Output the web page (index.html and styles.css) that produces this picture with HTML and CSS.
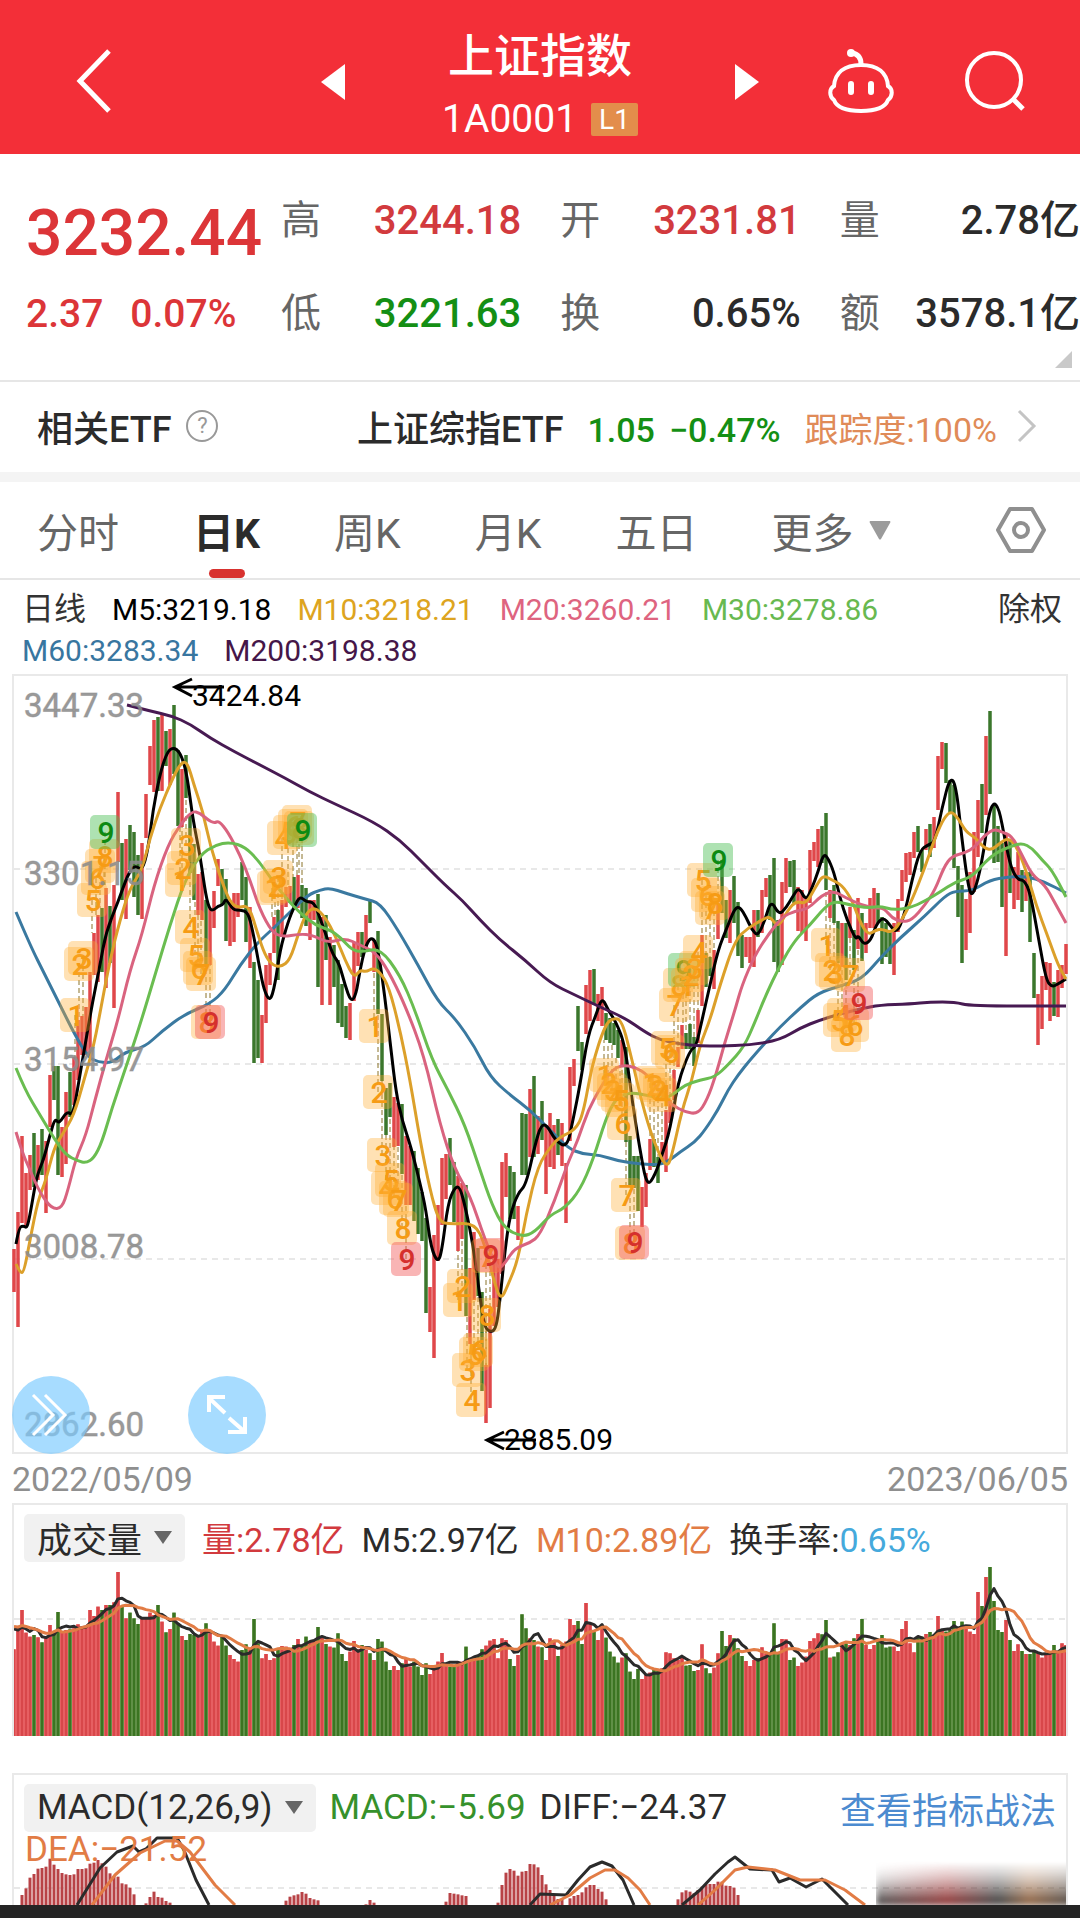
FILE: index.html
```html
<!DOCTYPE html>
<html lang="zh-CN">
<head>
<meta charset="utf-8">
<meta name="viewport" content="width=device-width, initial-scale=1">
<title>上证指数 1A0001</title>
<link rel="stylesheet" href="styles.css">
</head>
<body>
<header class="topbar">
  <button class="icon-btn back" aria-label="返回"><svg width="40" height="66" viewBox="0 0 40 66"><path d="M35 3 6 33l29 30" fill="none" stroke="#fff" stroke-width="5"/></svg></button>
  <div class="switcher">
    <button class="icon-btn" aria-label="上一个"><svg width="26" height="36" viewBox="0 0 26 36"><path d="M25 0v36L1 18z" fill="#fff"/></svg></button>
    <div class="title">
      <h1>上证指数</h1>
      <p>1A0001<span class="level">L1</span></p>
    </div>
    <button class="icon-btn" aria-label="下一个"><svg width="26" height="36" viewBox="0 0 26 36"><path d="M1 0v36l24-18z" fill="#fff"/></svg></button>
  </div>
  <button class="icon-btn robot" aria-label="助手"><svg width="70" height="66" viewBox="0 0 70 66"><g fill="none" stroke="#fff" stroke-width="4" stroke-linecap="round"><path d="M35 17c17 0 26 8 27 21 5 3 5 10 0 14-3 8-12 11-27 11S11 60 8 52c-5-4-5-11 0-14 1-13 10-21 27-21z"/><path d="M35 16c0-6-3-10-9-11" stroke-width="5"/><path d="M25 36v8M45 36v8" stroke-width="6"/></g><circle cx="25" cy="5" r="4" fill="#fff"/></svg></button>
  <button class="icon-btn" aria-label="搜索"><svg width="62" height="62" viewBox="0 0 62 62"><g fill="none" stroke="#fff" stroke-width="4"><circle cx="30" cy="30" r="27"/><path d="m49 49 10 10" stroke-width="5"/></g></svg></button>
</header>

<main>
<section class="quote">
  <div class="last">
    <strong>3232.44</strong>
    <p><span>2.37</span><span>0.07%</span></p>
  </div>
  <dl class="stats">
    <div><dt>高</dt><dd class="up">3244.18</dd></div>
    <div><dt>开</dt><dd class="up">3231.81</dd></div>
    <div><dt>量</dt><dd>2.78亿</dd></div>
    <div><dt>低</dt><dd class="down">3221.63</dd></div>
    <div><dt>换</dt><dd>0.65%</dd></div>
    <div><dt>额</dt><dd>3578.1亿</dd></div>
  </dl>
  <svg class="corner" width="17" height="17" viewBox="0 0 17 17"><path d="M17 0v17H0z" fill="#c9c9c9"/></svg>
</section>

<section class="etf">
  <span class="etf-label">相关ETF</span>
  <button class="icon-btn help" aria-label="说明">?</button>
  <a class="etf-link" href="#etf"><span class="etf-name">上证综指ETF</span><span class="down">1.05</span><span class="down pct">−0.47%</span><span class="track">跟踪度:100%</span><svg width="20" height="34" viewBox="0 0 20 34"><path d="m2 2 15 15L2 32" fill="none" stroke="#c4c4c4" stroke-width="3"/></svg></a>
</section>

<nav class="tabs">
  <button>分时</button>
  <button class="active">日K</button>
  <button>周K</button>
  <button>月K</button>
  <button>五日</button>
  <button class="more">更多<svg width="22" height="19" viewBox="0 0 22 19"><path d="M1 0h20q1 1 0 2L12 18q-1 1-2 0L1 2q-1-1 0-2z" fill="#9b9b9b"/></svg></button>
  <button class="gear" aria-label="设置"><svg width="50" height="48" viewBox="0 0 50 48"><g fill="none" stroke="#8f8f8f" stroke-width="4" stroke-linejoin="round"><path d="M14 3h22l12 21-12 21H14L2 24z"/><circle cx="25" cy="24" r="7"/></g></svg></button>
</nav>

<section class="legend">
  <span class="name">日线</span><span class="m5">M5:3219.18</span><span class="m10">M10:3218.21</span><span class="m20">M20:3260.21</span><span class="m30">M30:3278.86</span><button class="rights">除权</button>
  <span class="m60">M60:3283.34</span><span class="m200">M200:3198.38</span>
</section>

<section class="price">
  <svg id="price" viewBox="12 674 1056 780" role="img" aria-label="日K线图"></svg>
  <button class="round shift" aria-label="右移"><svg width="42" height="46" viewBox="0 0 42 46"><path d="m3 3 20 20L3 43M15 3l20 20-20 20" fill="none" stroke="#fff" stroke-width="3"/></svg></button>
  <button class="round expand" aria-label="全屏"><svg width="42" height="42" viewBox="0 0 42 42"><path d="M19 19 3 4M3 18V3h16M23 24l16 14M39 23v15H22" fill="none" stroke="#fff" stroke-width="4"/></svg></button>
</section>
<div class="dates"><time>2022/05/09</time><time>2023/06/05</time></div>

<section class="panel volume">
  <div class="panel-head">
    <button class="picker">成交量<svg width="18" height="13" viewBox="0 0 18 13"><path d="M0 0h18L9 13z" fill="#666"/></svg></button>
    <span class="up">量:2.78亿</span><span>M5:2.97亿</span><span class="orange">M10:2.89亿</span><span>换手率:<span class="cyan">0.65%</span></span>
  </div>
  <svg id="volume" viewBox="12 1567 1056 169" role="img" aria-label="成交量图"></svg>
</section>

<section class="panel macd">
  <div class="panel-head">
    <button class="picker">MACD(12,26,9)<svg width="18" height="13" viewBox="0 0 18 13"><path d="M0 0h18L9 13z" fill="#666"/></svg></button>
    <span class="leaf">MACD:−5.69</span><span>DIFF:−24.37</span><a href="#guide">查看指标战法</a>
  </div>
  <svg id="macd" viewBox="12 1837 1056 68" role="img" aria-label="MACD图"></svg>
  <div class="smudge"></div>
</section>
</main>
<footer class="bottom"></footer>
<script src="chart.js"></script>
</body>
</html>
```
FILE: styles.css
```css
* { box-sizing: border-box; }
body {
  margin: 0;
  background: #fff;
  color: #2b2b2b;
  font-family: Roboto, "Noto Sans CJK SC", sans-serif;
  font-weight: 500;
}
button { border: 0; padding: 0; background: none; color: inherit; font: inherit; }
a { color: inherit; text-decoration: none; }
h1, p, dl, dd { margin: 0; }
svg { display: block; }
.up { color: #d23a3e; }
.down { color: #148f14; }

.topbar {
  position: relative;
  display: flex;
  align-items: center;
  justify-content: flex-end;
  gap: 68px;
  height: 154px;
  padding: 8px 54px 0 74px;
  background: #f32f38;
  color: #fff;
}
.back { margin-right: auto; }
.switcher {
  position: absolute;
  left: 50%;
  top: 24px;
  display: flex;
  align-items: flex-start;
  justify-content: space-between;
  width: 440px;
  transform: translateX(-50%);
}
.switcher .icon-btn { margin-top: 40px; }
.title h1 { font-size: 46px; line-height: 64px; font-weight: 500; text-align: center; }
.title p { display: flex; align-items: center; justify-content: center; gap: 14px; font-size: 39px; line-height: 62px; font-weight: 400; }
.level { padding: 0 8px; background: #e38d4b; font-size: 28px; line-height: 33px; border-radius: 2px; }

.quote { position: relative; display: flex; height: 226px; padding: 44px 0 0 26px; }
.last { width: 255px; color: #dc3538; }
.last strong { display: block; font-size: 64px; line-height: 72px; font-weight: 500; }
.last p { display: flex; gap: 27px; font-size: 39px; line-height: 46px; margin-top: 21px; }
.stats { flex: 1; display: grid; grid-template-columns: repeat(3, 1fr); column-gap: 39px; grid-auto-rows: 93px; }
.stats div { display: flex; justify-content: space-between; font-size: 40px; line-height: 46px; }
.stats dt { font-weight: 400; color: #666; }
.corner { position: absolute; right: 8px; bottom: 12px; }

.etf {
  display: flex;
  align-items: center;
  height: 92px;
  padding: 0 43px 2px 37px;
  border-top: 2px solid #e6e6e6;
  font-size: 36px;
}
.help { width: 32px; height: 32px; margin-left: 15px; border: 2px solid #999; border-radius: 50%; color: #999; font-size: 22px; line-height: 26px; font-weight: 400; }
.etf-link { display: flex; align-items: baseline; margin-left: auto; font-size: 34px; }
.etf-link svg { align-self: center; }
.etf-name { margin-right: 24px; font-size: 36px; }
.pct { margin-left: 14px; }
.track { margin: 0 20px 0 24px; color: #e08b58; font-weight: 400; }

.tabs {
  display: flex;
  align-items: center;
  gap: 74px;
  height: 108px;
  padding: 0 34px 0 37px;
  border-top: 10px solid #f4f4f4;
  border-bottom: 2px solid #e6e6e6;
  color: #666;
  font-size: 41px;
  font-weight: 400;
}
.tabs button { height: 100%; }
.tabs .active { position: relative; color: #2b2b2b; font-weight: 700; }
.active::after { content: ""; position: absolute; left: 50%; bottom: 0; width: 36px; height: 9px; margin-left: -18px; border-radius: 5px; background: #d8322f; }
.more { display: flex; align-items: center; gap: 15px; }
.tabs .gear { margin-left: auto; }

.legend { display: flex; flex-wrap: wrap; column-gap: 26px; padding: 9px 18px 3px 22px; font-size: 30px; line-height: 41px; }
.legend span, .rights { font-weight: 400; }
.rights { margin-left: auto; }
.legend .name, .rights { color: #333; font-size: 32px; }
.m5 { color: #000; }
.m10 { color: #dda420; }
.m20 { color: #de6480; }
.m30 { color: #68b950; }
.m60 { color: #3876a0; }
.m200 { color: #451648; }

.price { position: relative; margin: 0 12px; border: 2px solid #e9e9e9; }
.price > svg { width: calc(100% + 4px); margin: -2px; }
.round { position: absolute; bottom: -2px; display: grid; place-items: center; width: 78px; height: 78px; border-radius: 50%; background: rgba(125, 204, 255, .68); }
.shift { left: -2px; }
.expand { left: 174px; }
.dates { display: flex; justify-content: space-between; padding: 0 12px; color: #8f8f8f; font-size: 34px; line-height: 51px; height: 49px; font-weight: 400; }

.panel { position: relative; margin: 0 12px; border: 2px solid #e9e9e9; border-bottom: 0; overflow: hidden; }
.panel > svg { width: calc(100% + 4px); margin: 0 -2px; overflow: visible; }
.panel-head { display: flex; align-items: center; height: 62px; padding: 3px 10px 0; gap: 17px; font-size: 34px; font-weight: 400; white-space: nowrap; }
.panel-head a { margin-left: auto; color: #4c8bd0; font-size: 36px; }
.picker { display: flex; align-items: center; gap: 12px; height: 48px; padding: 0 13px; border-radius: 5px; background: #f1f1f1; font-size: 35px; }
.volume { margin-bottom: 37px; }
.macd .panel-head { gap: 14px; font-size: 35px; }
.orange { color: #e27c45; }
.cyan { color: #45a9dc; }
.leaf { color: #36912b; }
.smudge {
  position: absolute;
  right: -14px;
  bottom: 0;
  width: 204px;
  height: 44px;
  background: linear-gradient(90deg, #fff0, #a22a 35%, #333a 60%, #a63a 75%, #333a), linear-gradient(#0000, #333);
  -webkit-mask-image: linear-gradient(#0000, #000);
  mask-image: linear-gradient(#0000, #000);
  filter: blur(3px);
}
.bottom { height: 13px; background: #242424; }

.grid { stroke: #e8e8e8; stroke-width: 2; stroke-dasharray: 6 5; }
.axis { fill: #8c8c8c; fill-opacity: .9; font-size: 33px; font-weight: 400; stroke: #8c8c8c; stroke-opacity: .5; }
.mark { fill: #000; font-size: 30px; font-weight: 400; }
.line { fill: none; stroke-width: 3; stroke-linejoin: round; }
.dea { fill: #e27c45; font-size: 35px; font-weight: 400; }
.count { font-size: 30px; text-anchor: middle; }
```
FILE: chart.js
```javascript
const RED = '#e0474a', GREEN = '#3b772c', STEP = 4, X0 = 14;
const xAt = i => X0 + STEP * i;

// Daily candles: direction, high and low on the chart's vertical scale.
const candles = `r1249,1292 r1212,1327 r1136,1223 r1173,1227 r1155,1190 g1133,1187 r1145,1180 g1129,1175 r1141,1213 r1075,1127
g1066,1100 g1066,1175 r1127,1177 r1092,1164 g1072,1117 r1057,1105 r1020,1080 r1016,1055 r1007,1055 r972,1057
r933,975 r915,982 g908,972 r888,988 g906,963 r885,1008 r792,862 g843,900 r839,919 g825,870
g832,897 g855,915 r843,919 r794,838 r746,785 r720,792 g717,791 r713,791 g731,766 r729,785
g705,774 g750,826 r769,827 g755,798 g815,873 g844,900 r874,915 r872,920 g900,967 r908,965
r891,928 r859,886 g869,905 g879,941 r903,946 r893,942 r893,917 g862,900 g877,942 r907,968
g962,1063 g980,1058 r1015,1063 r965,1023 r953,985 r917,953 g910,980 r900,937 r887,907 r886,903
g877,907 r875,908 g885,918 g888,926 r900,940 r900,920 g894,987 r917,1005 g915,960 r937,1005
g945,987 g960,1023 g984,1027 g1006,1038 r1003,1040 r943,1001 r932,966 g932,957 r915,947 g900,923
r940,972 g931,1014 g1014,1081 g1088,1135 g1083,1117 r1097,1147 r1103,1146 g1104,1174 r1136,1205 r1146,1205
g1151,1221 g1168,1234 g1192,1241 g1218,1313 r1287,1332 r1235,1358 r1205,1261 r1158,1225 r1154,1199 g1138,1185
g1162,1222 r1176,1251 r1183,1239 g1185,1316 r1268,1344 r1232,1300 g1248,1296 g1292,1391 r1365,1423 r1309,1408
r1261,1326 r1259,1307 r1162,1274 r1153,1197 g1166,1219 g1172,1219 r1206,1240 g1113,1175 g1114,1175 r1089,1157
g1076,1157 r1116,1154 g1101,1140 r1127,1194 r1113,1167 r1125,1169 g1119,1155 r1123,1166 r1163,1223 r1067,1141
r1059,1086 g1006,1051 g1042,1070 r985,1034 r970,1021 g969,1005 r994,1021 r987,1026 g1013,1040 g1018,1043
g1023,1045 g1030,1058 r1040,1067 g1047,1142 g1136,1185 g1156,1188 g1156,1211 r1187,1227 r1173,1207 r1139,1170
g1139,1167 g1157,1183 r1142,1162 r1110,1172 r1100,1123 r1070,1100 r1047,1067 r1025,1049 g1033,1049 g1024,1049
g1037,1066 r1010,1043 r935,1006 g953,987 g957,976 r950,989 r903,939 g860,913 g900,938 r890,943
g876,923 g902,956 g935,968 r937,957 r937,963 r910,967 g910,937 r890,933 r878,897 g875,920
g858,962 g920,972 r882,965 r858,893 g861,887 g860,903 r887,931 r890,933 r897,941 r850,903
r842,861 r829,867 g826,863 g813,890 r890,918 g885,923 g921,963 r923,967 g923,980 r907,938
g930,970 r898,949 g913,961 r923,953 r898,928 r888,928 g893,923 g917,964 g923,957 g930,964
r923,975 r899,932 r870,901 r853,882 r852,875 r832,858 g826,852 g850,872 r829,850 g824,857
r817,848 r756,810 r742,769 g743,783 g780,813 g785,868 g866,917 g885,963 r899,950 r872,933
r832,892 r800,857 g784,833 r736,815 g711,794 g805,863 g826,862 g843,907 r833,956 g840,893
r867,909 r852,900 g870,912 r872,901 g872,942 g953,998 r994,1045 r976,1029 r962,990 r963,1021
g982,1016 r970,1017 r965,988 r944,974`.trim().split(/\s+/).map(s => {
  const [hi, lo] = s.slice(1).split(',').map(Number);
  return { color: s[0] === 'r' ? RED : GREEN, hi, lo };
});

// Moving averages, as x,y pairs.
const averages = [
  ['#3a79a0', '16,912 30,945 45,975 60,1005 75,1035 88,1057 98,1062 112,1063 125,1052 145,1047 162,1031 185,1014 210,1004 225,990 240,965 258,942 275,927 292,910 308,895 320,890 330,888 345,893 365,899 380,903 398,930 418,965 438,1002 455,1018 475,1047 490,1077 510,1095 530,1110 550,1130 568,1148 582,1154 600,1155 618,1161 640,1164 660,1165 670,1160 680,1152 695,1142 705,1130 718,1110 728,1090 738,1075 750,1060 765,1043 780,1027 800,1008 818,993 840,986 862,979 880,958 900,938 925,916 945,896 955,891 972,891 990,880 1008,877 1026,876 1045,882 1066,893'],
  ['#000', '16,1244 19,1227 24,1226 27,1228 30,1215 36,1180 40,1168 44,1158 50,1135 55,1118 59,1124 67,1111 73,1116 79,1080 86,1040 92,1005 100,965 106,932 118,902 128,874 135,865 142,871 148,850 153,810 160,774 166,755 171,748 177,749 182,757 187,775 193,820 200,855 206,897 210,910 214,910 218,906 223,905 226,898 233,910 240,910 248,912 253,932 260,970 264,990 270,1002 275,985 280,950 288,922 294,907 300,896 306,902 314,902 320,918 326,935 333,955 339,963 345,985 351,1002 356,995 360,970 365,948 370,938 375,940 379,955 385,998 391,1050 396,1092 402,1120 411,1147 420,1183 426,1210 431,1248 438,1263 442,1250 448,1203 455,1187 460,1187 466,1210 473,1245 479,1290 484,1325 489,1332 496,1330 500,1300 505,1250 510,1215 518,1193 526,1185 535,1145 541,1125 547,1125 555,1140 567,1148 573,1120 580,1085 588,1035 596,1015 602,997 608,1010 616,1022 625,1045 632,1100 640,1150 647,1187 655,1175 662,1155 670,1130 678,1082 690,1050 696,1047 702,1020 710,985 718,950 728,925 735,908 740,907 746,917 752,930 758,936 765,920 771,900 779,915 786,908 793,896 799,887 806,901 812,888 818,872 823,855 827,856 834,872 840,898 847,920 856,940 858,935 864,945 871,940 876,925 883,917 890,925 895,932 900,927 906,908 912,880 920,850 928,845 935,842 942,808 950,777 956,785 962,840 968,885 972,897 978,880 984,850 988,818 993,802 999,808 1005,840 1011,868 1018,880 1024,880 1030,892 1038,935 1046,980 1052,987 1058,984 1066,979'],
  ['#dca02a', '16,1264 20,1273 24,1272 30,1240 38,1200 46,1180 54,1148 62,1135 74,1115 84,1080 94,1045 102,1002 110,960 120,920 130,888 142,870 150,838 160,808 172,780 180,764 187,761 194,785 203,812 210,845 222,882 230,902 238,908 249,905 258,935 265,955 272,965 281,967 290,960 298,935 306,913 315,907 325,917 335,935 345,960 354,978 360,970 366,972 373,968 380,972 389,987 400,1030 410,1080 420,1140 430,1190 439,1222 450,1224 475,1223 485,1245 495,1285 501,1300 508,1285 518,1260 526,1215 538,1165 552,1145 560,1137 575,1130 583,1115 592,1065 605,1025 613,1018 622,1020 632,1060 645,1115 657,1150 667,1168 672,1155 682,1110 692,1080 700,1045 710,1020 720,985 735,940 748,928 762,920 770,916 778,928 788,910 796,901 806,904 815,888 823,875 832,880 842,885 852,900 860,922 868,935 876,930 882,929 892,933 902,920 912,900 924,870 936,835 944,818 951,811 958,818 966,832 976,838 984,848 992,850 1000,843 1008,838 1016,845 1026,870 1036,905 1048,937 1058,965 1066,979'],
  ['#d9637f', '16,1132 22,1152 30,1170 40,1193 52,1209 62,1208 68,1190 76,1158 86,1135 95,1100 106,1060 118,1020 130,970 142,935 154,885 168,845 180,825 192,811 200,813 208,820 214,823 219,821 228,832 240,855 250,880 260,910 272,932 282,937 300,934 312,935 328,943 345,938 360,945 375,952 388,970 405,1005 424,1055 440,1125 455,1170 470,1195 485,1240 498,1270 505,1263 515,1248 530,1243 540,1235 555,1200 567,1165 578,1140 588,1110 602,1085 612,1070 622,1065 635,1067 648,1075 662,1095 672,1105 685,1112 698,1114 707,1100 716,1075 724,1045 735,1010 742,985 755,955 768,935 782,917 795,911 808,909 822,895 834,891 846,898 862,905 874,908 884,908 892,918 902,922 912,920 925,905 935,890 944,867 952,856 965,853 975,847 985,835 994,829 1002,832 1012,836 1022,855 1032,875 1045,885 1055,903 1066,923'],
  ['#6abd50', '16,1068 25,1090 40,1115 55,1140 66,1155 78,1161 86,1163 94,1158 102,1142 112,1108 125,1070 140,1025 155,975 170,925 185,880 200,855 215,845 230,842 245,847 258,860 272,880 285,897 300,913 315,925 330,930 340,937 352,950 362,952 380,948 400,975 415,1010 432,1060 448,1090 465,1125 480,1170 492,1205 504,1228 522,1237 535,1232 550,1215 565,1208 580,1190 593,1160 606,1118 616,1098 630,1092 650,1096 665,1099 675,1093 685,1085 700,1080 715,1077 728,1065 744,1047 755,1022 765,997 780,965 795,940 810,925 825,907 835,901 850,905 868,908 880,906 893,910 910,908 925,901 940,892 955,882 972,877 985,862 997,852 1012,846 1022,843 1032,848 1042,860 1052,870 1066,897'],
  ['#471a52', '127,705 150,711 172,716 190,724 210,738 235,752 260,765 285,778 310,792 335,804 374,822 400,840 422,862 445,885 462,900 480,920 500,940 525,960 550,983 575,995 600,1007 625,1018 645,1032 660,1040 680,1044 700,1046 720,1046 750,1045 780,1040 800,1028 820,1020 840,1014 860,1009 880,1005 910,1004 930,1002 955,1002 970,1006 1066,1006']
];

// Nine-count markers: x, y, digit; a trailing u/d marks a finished count.
const counts = `75,1015,1 79,964,2 83,958,3 92,900,5 96,878,6 100,866,7 104,856,8 105,832,9u
180,880,1 182,868,2 186,845,3 190,927,4 195,955,5 198,968,6 201,974,7 206,1022,8 210,1022,9d
272,888,1 275,886,2 278,877,3 282,838,4 288,832,5 293,826,6 297,822,7 299,828,8 302,830,9u
374,1026,1 378,1092,2 382,1155,3 386,1188,4 390,1180,5 394,1198,6 398,1200,7 402,1228,8 406,1259,9d
458,1300,1 462,1286,2 467,1370,3 471,1400,4 474,1354,5 478,1350,6 486,1315,8 486,1256,7 490,1255,9d
604,1075,1 608,1083,2 612,1090,3 616,1095,4 620,1100,5 622,1123,6 626,1195,7 630,1243,8 634,1242,9d
650,1083,1 654,1085,2 658,1090,3 662,1095,4 666,1048,5 670,1052,6 674,1005,7 678,985,8 683,970,9u
686,985,1 690,975,2 694,968,3 698,952,4 702,880,5 706,895,6 710,908,7 714,903,8 718,860,9u
826,945,1 830,970,2 834,973,3 838,1020,5 842,1015,4 846,1035,8 850,975,7 854,1025,6 858,1003,9d`
  .trim().split(/\s+/).map(s => s.split(','));

// Depth of each volume bar's top, in thirds of a pixel below the panel's zero line.
const volumeTops = `478 415 360 428 440 435 442 457 440 405 425 366 425 420 418 415 403 410 408 360 378 350 360 345 345 337 246 350 385 368
385 402 385 385 368 375 345 395 427 417 368 400 438 450 432 435 440 420 400 430 455 467 440 467 495 507 515 480 463 480
387 460 505 492 510 505 480 468 470 485 465 447 465 440 455 450 411 440 462 470 473 430 492 513 485 453 478 465 480 490
510 447 455 515 540 528 540 520 505 530 515 530 555 520 552 530 515 489 520 530 530 515 515 470 505 500 495 478 467 452
447 505 445 450 507 528 495 373 415 445 450 470 472 510 445 450 498 465 455 387 405 393 462 339 400 425 450 405 443 485
500 518 503 490 545 567 537 567 555 548 540 540 535 487 490 505 510 500 527 525 543 540 463 535 550 533 490 423 468 435
445 475 498 513 528 510 505 472 490 490 400 490 447 448 510 503 528 518 500 453 445 430 433 390 503 500 487 460 460 465
445 432 387 465 477 465 450 435 473 470 470 483 417 393 460 487 440 440 432 426 440 378 420 425 420 393 415 395 412 425
432 306 348 261 231 333 420 426 390 450 483 463 483 492 492 485 488 503 490 485 465 485 460 465 488`
  .trim().split(/\s+/).slice(0, candles.length).map(v => 1490 + v / 3);

// MACD columns by starting index.
const macdRuns = {
  2: '1215 1195 1163 1152 1136 1134 1130 1106 1124 1137 1149 1153 1155 1153 1137 1137 1135 1121 1118 1110 1120 1130 1150 1158 1160 1180 1183 1193 1213',
  33: '1240 1221 1205 1221 1223 1233 1238',
  68: '1232 1220 1216 1213 1206 1211 1224 1228 1231',
  88: '1243 1230 1238',
  108: '1235 1209 1211 1213 1216 1218',
  121: '1238 1185 1148 1137 1142 1157 1145 1143 1122 1123 1132 1155 1183 1200 1215 1227 1228',
  139: '1225 1218 1215 1207 1192 1185 1185 1197 1205 1228',
  166: '1228 1207 1201 1205 1210 1200 1190 1183 1182 1182 1175 1175 1187 1188 1193 1215'
};

const bar = (x, y1, y2, c, w = 3) => `<rect x="${x - w / 2}" y="${y1}" width="${w}" height="${y2 - y1}" fill="${c}"/>`;
const line = (pts, c) => `<polyline class="line" points="${pts}" stroke="${c}"/>`;
const grid = y => `<path class="grid" d="M14 ${y}H1066"/>`;

// Rounds the joints of a moving average.
function smooth(pts) {
  const p = pts.split(' ').map(s => s.split(',').map(Number));
  let d = `M${p[0]}`;
  for (let i = 1; i < p.length - 1; i++) {
    d += `Q${p[i]} ${(p[i][0] + p[i + 1][0]) / 2},${(p[i][1] + p[i + 1][1]) / 2}`;
  }
  return d + `L${p[p.length - 1]}`;
}

function drawPrice() {
  let s = [869, 1064, 1259].map(grid).join('');
  candles.forEach((c, i) => { s += bar(xAt(i), c.hi, c.lo, c.color, 3.5); });
  counts.forEach(([x, y]) => {
    const c = candles[Math.round((x - X0) / STEP)];
    const end = y < c.hi ? c.hi : c.lo;
    s += `<path d="M${x} ${y}V${end}" stroke="#8a7228" stroke-dasharray="5 3"/>`;
  });
  averages.forEach(([c, pts]) => { s += `<path class="line" d="${smooth(pts)}" stroke="${c}"/>`; });
  counts.forEach(([x, y, mark]) => {
    const done = mark[1];
    const fill = done === 'u' ? '#4cbf55' : done === 'd' ? '#f25a5a' : '#ffab2e';
    const ink = done === 'u' ? '#0d8a12' : done === 'd' ? '#d5302d' : '#f69b14';
    s += `<rect x="${x - 15}" y="${y - 17}" width="30" height="34" rx="5" fill="${fill}" fill-opacity="${done ? .45 : .36}"/>`;
    s += `<text class="count" x="${+x + 1}" y="${+y + 11}" fill="${ink}">${mark[0]}</text>`;
  });
  [['3447.33', 717], ['3301.15', 885], ['3154.97', 1071], ['3008.78', 1258], ['2862.60', 1436]]
    .forEach(([t, y]) => { s += `<text class="axis" x="24" y="${y}">${t}</text>`; });
  s += '<path d="M224 687H176M192 679l-17 8 17 9M536 1440H488M504 1432l-17 8 17 9" fill="none" stroke="#000" stroke-width="3"/>';
  s += '<text class="mark" x="192" y="706">3424.84</text><text class="mark" x="504" y="1450">2885.09</text>';
  document.getElementById('price').innerHTML = s;
}

function movingAverage(n) {
  const seed = Array(n - 1).fill(1624).concat(volumeTops);
  return volumeTops.map((_, i) => {
    const sum = seed.slice(i, i + n).reduce((a, b) => a + b, 0);
    return `${xAt(i)},${sum / n}`;
  }).join(' ');
}

function drawVolume() {
  let s = grid(1619);
  volumeTops.forEach((y, i) => {
    const red = candles[i].color === RED;
    s += bar(xAt(i), y, 1736, red ? '#f4787a' : '#86ad6c', 4);
    s += bar(xAt(i), y, 1736, red ? '#d8474a' : '#3b7422');
  });
  s += line(movingAverage(5), '#2b2b2b') + line(movingAverage(10), '#e27c45');
  document.getElementById('volume').innerHTML = s;
}

function drawMacd() {
  let s = grid(1888);
  for (const [start, run] of Object.entries(macdRuns)) {
    run.split(' ').forEach((v, k) => { s += bar(xAt(+start + k), 1490 + v / 3, 1905, '#b84246'); });
  }
  ['77,1905 100,1868 117,1852 133,1846 139,1852 146,1849 157,1838 177,1838 184,1850 196,1880 209,1905',
   '530,1905 540,1894 566,1895 578,1880 590,1867 602,1862 612,1866 623,1880 634,1905',
   '682,1905 700,1890 715,1874 728,1862 735,1857 750,1869 772,1870 779,1882 790,1878 806,1887 822,1879 835,1892 848,1905'
  ].forEach(p => { s += line(p, '#2b2b2b'); });
  ['92,1905 115,1875 140,1853 165,1841 177,1841 190,1852 215,1885 235,1905',
   '550,1905 570,1895 590,1878 605,1870 615,1870 628,1878 640,1890 650,1905',
   '698,1905 715,1890 735,1870 748,1867 775,1870 800,1880 825,1880 845,1890 865,1905'
  ].forEach(p => { s += line(p, '#e27c45'); });
  s += '<text class="dea" x="25" y="1861">DEA:−21.52</text>';
  document.getElementById('macd').innerHTML = s;
}

drawPrice();
drawVolume();
drawMacd();
```
